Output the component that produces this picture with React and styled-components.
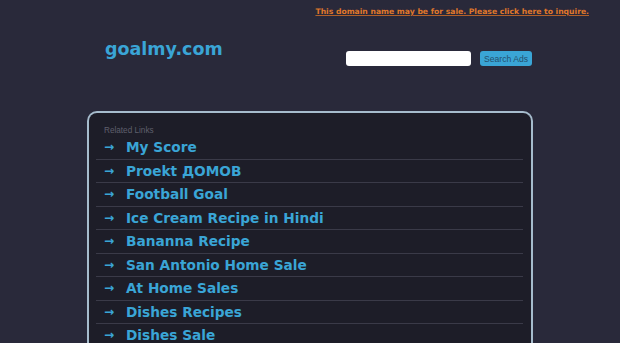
import React from "react";
import styled, { createGlobalStyle } from "styled-components";

const Global = createGlobalStyle`
  html, body { margin: 0; padding: 0; background: #29293a; }
  body { font-family: "DejaVu Sans", Verdana, sans-serif; overflow: hidden; }
  * { box-sizing: border-box; }
`;

const Page = styled.div`
  width: 620px;
  height: 343px;
  background: #29293a;
  display: flex;
  flex-direction: column;
  overflow: hidden;
`;

const TopBar = styled.div`
  display: flex;
  justify-content: flex-end;
  padding: 7px 31px 0 0;
  height: 21px;
  flex-shrink: 0;
`;

const SaleLink = styled.a`
  font-family: "DejaVu Sans", sans-serif;
  font-weight: bold;
  font-size: 7.65px;
  color: #e0782a;
  text-decoration: underline;
  text-decoration-color: #b0602a;
  line-height: 10px;
`;

const Header = styled.div`
  display: flex;
  align-items: flex-start;
  justify-content: space-between;
  padding: 0 88px 0 105px;
  margin-top: 12px;
  height: 78px;
  flex-shrink: 0;
`;

const Logo = styled.div`
  font-family: "DejaVu Sans", sans-serif;
  font-weight: bold;
  font-size: 17.5px;
  color: #3aa5d6;
  line-height: 20px;
  margin-top: 6px;
`;

const SearchForm = styled.div`
  display: flex;
  gap: 9px;
  margin-top: 18px;
`;

const SearchInput = styled.div`
  width: 125px;
  height: 15px;
  background: #ffffff;
  border-radius: 3px;
`;

const SearchButton = styled.div`
  width: 52px;
  height: 15px;
  background: #3aa5d6;
  border-radius: 3px;
  font-family: "Liberation Sans", Arial, sans-serif;
  font-size: 8.6px;
  color: #24506e;
  display: flex;
  align-items: center;
  justify-content: center;
`;

const Panel = styled.div`
  margin: 0 0 0 87px;
  width: 446px;
  flex-shrink: 0;
  background: #1d1d28;
  border: 2px solid #a6bccd;
  border-bottom: none;
  border-radius: 10px 10px 0 0;
  padding: 12px 8px 0 7px;
`;

const Caption = styled.div`
  font-family: "Liberation Sans", Arial, sans-serif;
  font-size: 8.2px;
  color: #5f5f6c;
  padding-left: 8px;
  line-height: 11px;
`;

const List = styled.div`
  display: flex;
  flex-direction: column;
`;

const Row = styled.div`
  display: flex;
  align-items: center;
  height: 23.5px;
  border-bottom: 1px solid #3a3a48;
  padding-left: 8px;
  gap: 11px;
  font-family: "DejaVu Sans", sans-serif;
  font-weight: bold;
  font-size: 13.7px;
  color: #3aa5d6;
`;

const Arrow = styled.span`
  font-size: 12px;
  width: 11px;
  display: inline-block;
`;

const links = [
  "My Score",
  "Proekt ДОМОВ",
  "Football Goal",
  "Ice Cream Recipe in Hindi",
  "Bananna Recipe",
  "San Antonio Home Sale",
  "At Home Sales",
  "Dishes Recipes",
  "Dishes Sale",
];

export default function App() {
  return (
    <Page>
      <Global />
      <TopBar>
        <SaleLink href="#">This domain name may be for sale. Please click here to inquire.</SaleLink>
      </TopBar>
      <Header>
        <Logo>goalmy.com</Logo>
        <SearchForm>
          <SearchInput />
          <SearchButton>Search Ads</SearchButton>
        </SearchForm>
      </Header>
      <Panel>
        <Caption>Related Links</Caption>
        <List>
          {links.map((l) => (
            <Row key={l}>
              <Arrow>→</Arrow>
              <span>{l}</span>
            </Row>
          ))}
        </List>
      </Panel>
    </Page>
  );
}
